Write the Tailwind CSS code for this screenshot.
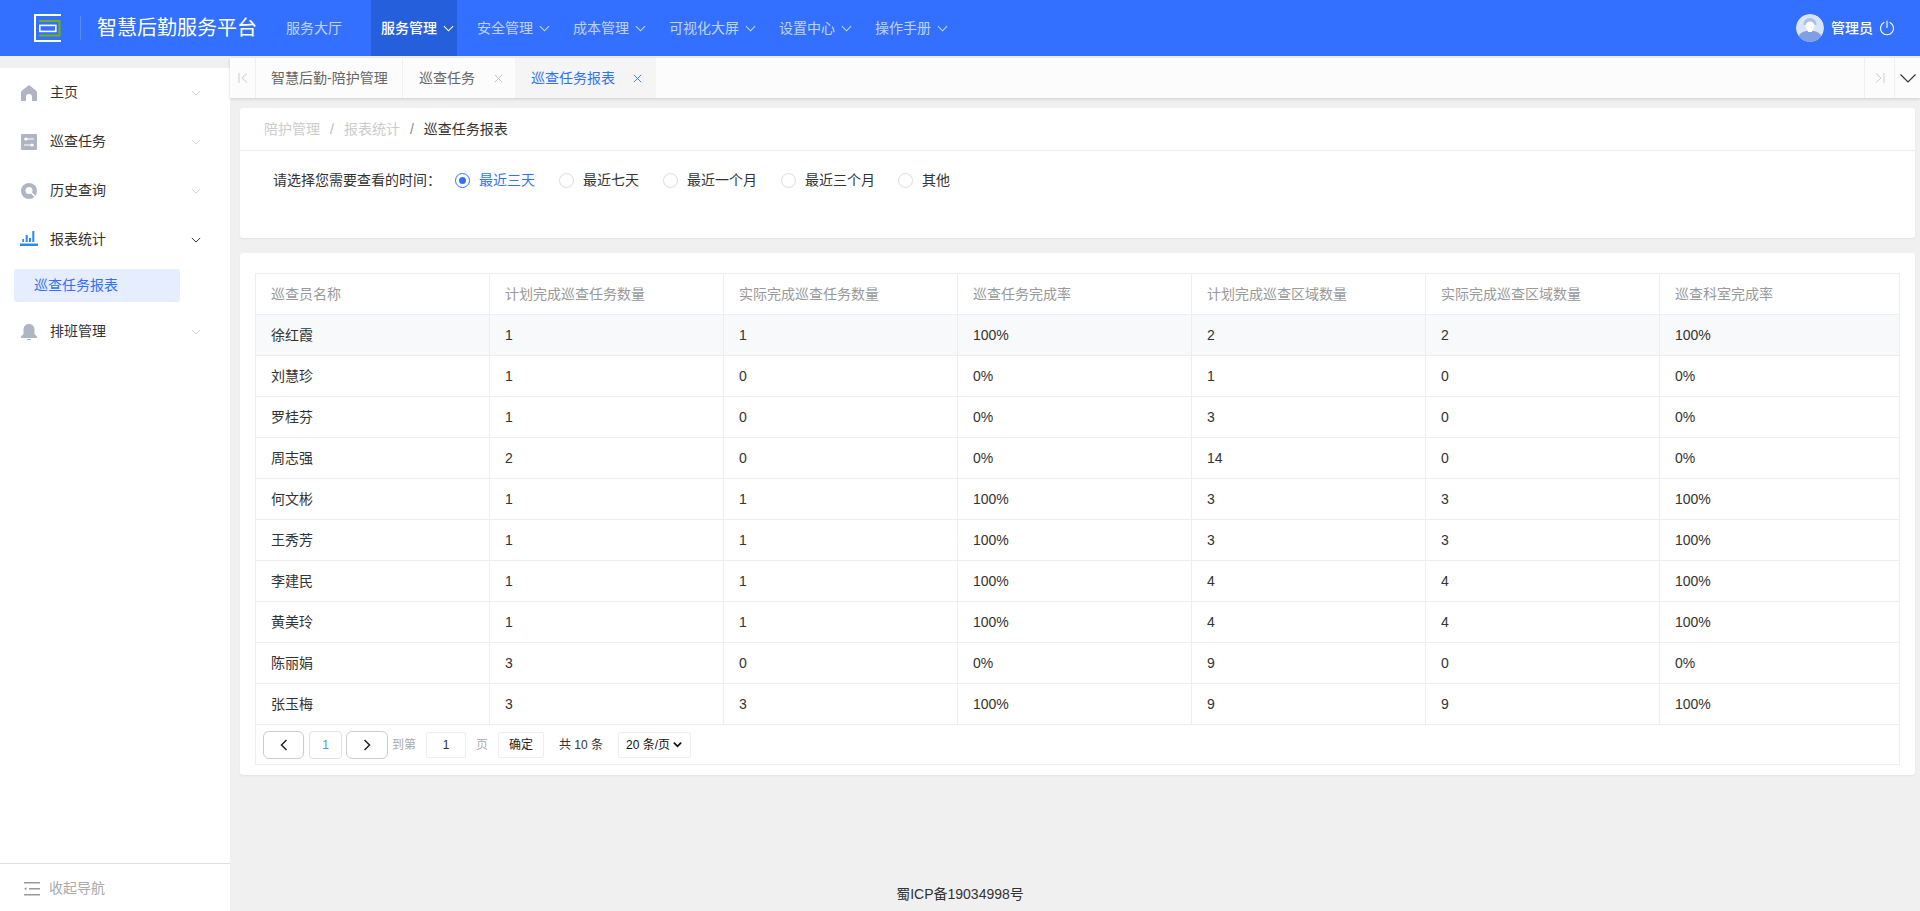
<!DOCTYPE html>
<html lang="zh-CN">
<head>
<meta charset="utf-8">
<title>智慧后勤服务平台</title>
<script src="https://cdn.jsdelivr.net/npm/@tailwindcss/browser@4"></script>
</head>
<body class="h-[911px] overflow-hidden bg-[#f0f0f0] font-['Liberation_Sans','Noto_Sans_CJK_SC',sans-serif] text-[14px] text-[#333]">

<!-- Header -->
<header class="flex h-14 items-center bg-[#3370ff] text-white">
    <svg class="ml-[34px] h-[28px] w-[28px]" viewBox="0 0 28 28" fill="none">
        <path d="M27 1H1v26h26" stroke="#fff" stroke-width="2"/>
        <path d="M5 7h20.500v14.600H5" stroke="#78b000" stroke-width="2"/>
        <rect x="5.800" y="11.400" width="16" height="6" stroke="#fff" stroke-width="1.600"/>
    </svg>
    <div class="ml-[18px] h-6 w-px bg-white/20"></div>
    <h1 class="ml-4 text-[20px] leading-none text-white">智慧后勤服务平台</h1>
    <a class="ml-[29px] text-white/70">服务大厅</a>
    <nav class="ml-[29px] flex h-full items-center gap-[10px] text-white/70">
        <a class="flex h-full items-center gap-[6px] bg-[#265fdc] pr-[2px] pl-[10px] font-medium text-white">服务管理
            <svg class="mr-[1px] h-[11px] w-[11px]" viewBox="0 0 12 12" fill="none" stroke="currentColor" stroke-width="1.2"><path d="M1 3.5l5 5 5-5"/></svg></a>
        <a class="flex h-full items-center gap-[6px] pr-[2px] pl-[10px]">安全管理
            <svg class="mr-[1px] h-[11px] w-[11px]" viewBox="0 0 12 12" fill="none" stroke="currentColor" stroke-width="1.2"><path d="M1 3.5l5 5 5-5"/></svg></a>
        <a class="flex h-full items-center gap-[6px] pr-[2px] pl-[10px]">成本管理
            <svg class="mr-[1px] h-[11px] w-[11px]" viewBox="0 0 12 12" fill="none" stroke="currentColor" stroke-width="1.2"><path d="M1 3.5l5 5 5-5"/></svg></a>
        <a class="flex h-full items-center gap-[6px] pr-[2px] pl-[10px]">可视化大屏
            <svg class="mr-[1px] h-[11px] w-[11px]" viewBox="0 0 12 12" fill="none" stroke="currentColor" stroke-width="1.2"><path d="M1 3.5l5 5 5-5"/></svg></a>
        <a class="flex h-full items-center gap-[6px] pr-[2px] pl-[10px]">设置中心
            <svg class="mr-[1px] h-[11px] w-[11px]" viewBox="0 0 12 12" fill="none" stroke="currentColor" stroke-width="1.2"><path d="M1 3.5l5 5 5-5"/></svg></a>
        <a class="flex h-full items-center gap-[6px] pr-[2px] pl-[10px]">操作手册
            <svg class="mr-[1px] h-[11px] w-[11px]" viewBox="0 0 12 12" fill="none" stroke="currentColor" stroke-width="1.2"><path d="M1 3.5l5 5 5-5"/></svg></a>
    </nav>
    <div class="mr-[25px] ml-auto flex items-center">
        <svg class="h-7 w-7 rounded-full" viewBox="0 0 28 28">
            <circle cx="14" cy="14" r="14" fill="#d9e4f8"/>
            <path d="M14 4c-4 0-6.500 3-6.500 7h13c0-4-2.500-7-6.500-7z" fill="#a9c0ec"/>
            <path d="M2.500 22c1.500-3 5-4.500 8-5h7c3 .5 6.500 2 8 5-2.500 3.800-6.800 6-11.500 6s-9-2.200-11.500-6z" fill="#7f9fe4"/>
            <circle cx="14" cy="12" r="4.500" fill="#fff"/>
            <path d="M11.500 15h5l-.5 3h-4z" fill="#fff"/>
        </svg>
        <span class="ml-[7px] font-medium">管理员</span>
        <svg class="ml-[6px] h-4 w-4" viewBox="0 0 16 16" fill="none" stroke="#fff" stroke-width="1.1" stroke-linecap="round"><path d="M5 2.500a6.500 6.500 0 1 0 6 0M8 1v6.500"/></svg>
    </div>
</header>

<div class="flex h-[855px]">
    <!-- Sidebar -->
    <aside class="mt-3 flex w-[230px] flex-none flex-col bg-white">
        <ul class="flex-1">
            <li class="flex h-[49px] items-center pr-[29px] pl-[21px]">
                <svg class="h-4 w-4" viewBox="0 0 16 16" fill="#b0b5c6"><path d="M8 0L1 5.500 0 7v9h5v-4a3 3 0 0 1 6 0v4h5V7l-1-1.500z"/></svg>
                <span class="ml-[13px] flex-1">主页</span>
                <svg class="h-[10px] w-[10px] text-[#c8c8c8]" viewBox="0 0 12 12" fill="none" stroke="currentColor" stroke-width="1"><path d="M1 3.500l5 5 5-5"/></svg>
            </li>
            <li class="flex h-[49px] items-center pr-[29px] pl-[21px]">
                <svg class="h-4 w-4" viewBox="0 0 16 16"><rect width="16" height="16" rx="1" fill="#b0b5c6"/><path d="M3 5h10M3 11h10" stroke="#fff" stroke-width="1"/><circle cx="5" cy="5" r="1.500" fill="#fff"/><circle cx="11" cy="11" r="1.500" fill="#fff"/></svg>
                <span class="ml-[13px] flex-1">巡查任务</span>
                <svg class="h-[10px] w-[10px] text-[#c8c8c8]" viewBox="0 0 12 12" fill="none" stroke="currentColor" stroke-width="1"><path d="M1 3.500l5 5 5-5"/></svg>
            </li>
            <li class="flex h-[49px] items-center pr-[29px] pl-[21px]">
                <svg class="h-4 w-4" viewBox="0 0 16 16"><circle cx="8" cy="8" r="8" fill="#b0b5c6"/><circle cx="8" cy="7.500" r="3.500" fill="#fff"/><path d="M10.500 10l3.500 3.500" stroke="#fff" stroke-width="1.500"/></svg>
                <span class="ml-[13px] flex-1">历史查询</span>
                <svg class="h-[10px] w-[10px] text-[#c8c8c8]" viewBox="0 0 12 12" fill="none" stroke="currentColor" stroke-width="1"><path d="M1 3.500l5 5 5-5"/></svg>
            </li>
            <li class="flex h-[49px] items-center pr-[29px] pl-5">
                <svg class="mb-[3px] h-[15px] w-[18px]" viewBox="0 0 18 15" fill="#2f86f6"><path d="M0 12.500h18V15H0zM2.300 8H4v3H2.300zM5.700 4h2v7h-2zM9 7h2v4H9zM12.300 0h2v11h-2z"/></svg>
                <span class="ml-[12px] flex-1">报表统计</span>
                <svg class="h-[10px] w-[10px] text-[#333]" viewBox="0 0 12 12" fill="none" stroke="currentColor" stroke-width="1.200"><path d="M1 3.500l5 5 5-5"/></svg>
            </li>
            <li class="mt-[5px] ml-[14px] flex h-[33px] w-[166px] items-center rounded-[3px] bg-[#e6edff] pl-5 text-[#3370ff]">巡查任务报表</li>
            <li class="mt-[5px] flex h-[49px] items-center pr-[29px] pl-[21px]">
                <svg class="h-4 w-4" viewBox="0 0 16 16" fill="#b0b5c6"><path d="M8 0C4.500 0 2.500 2.500 2.500 6v4L0 12.500V14h16v-1.500L13.500 10V6C13.500 2.500 11.500 0 8 0zM6 15h4v1H6z"/></svg>
                <span class="ml-[13px] flex-1">排班管理</span>
                <svg class="h-[10px] w-[10px] text-[#c8c8c8]" viewBox="0 0 12 12" fill="none" stroke="currentColor" stroke-width="1"><path d="M1 3.500l5 5 5-5"/></svg>
            </li>
        </ul>
        <div class="flex h-12 items-center border-t border-[#e0e0e0] pt-[2px] pl-6 text-[#aaa]">
            <svg class="h-[14px] w-4" viewBox="0 0 16 14" fill="#999"><path d="M0 0h16v1.500H0zM5 6h11v1.500H5zM0 12h16v1.500H0zM0 6.700l2.500-1.500v3z"/></svg>
            <span class="ml-[9px]">收起导航</span>
        </div>
    </aside>

    <!-- Main -->
    <main class="flex min-w-0 flex-1 flex-col">
        <!-- Tabs -->
        <div class="mt-[2px] flex h-10 flex-none items-stretch bg-[#fcfcfc] shadow-[0_1px_3px_rgba(0,0,0,0.15)]">
            <div class="flex w-[26px] items-center justify-center border-r border-[#f0f0f0] text-[#ccc]">
                <svg class="h-3 w-3" viewBox="0 0 12 12" fill="none" stroke="currentColor"><path d="M2 1v10M10 1.500L5 6l5 4.500"/></svg>
            </div>
            <div class="flex w-[147px] items-center border-r border-[#f0f0f0] pl-[15px] text-[#666]">智慧后勤-陪护管理</div>
            <div class="flex w-[112px] items-center pl-4 text-[#666]">巡查任务
                <svg class="ml-[19px] h-[9px] w-[9px] text-[#bbb]" viewBox="0 0 10 10" fill="none" stroke="currentColor"><path d="M1 1l8 8M9 1l-8 8"/></svg></div>
            <div class="flex w-[141px] items-center bg-[#f5f5f5] pl-4 text-[#3370ff]">巡查任务报表
                <svg class="ml-[18px] h-[9px] w-[9px]" viewBox="0 0 10 10" fill="none" stroke="currentColor"><path d="M1 1l8 8M9 1l-8 8"/></svg></div>
            <div class="ml-auto flex w-[31px] items-center justify-center border-x border-[#f0f0f0] text-[#ccc]">
                <svg class="h-3 w-3" viewBox="0 0 12 12" fill="none" stroke="currentColor"><path d="M10 1v10M2 1.500L7 6l-5 4.500"/></svg>
            </div>
            <div class="flex w-[25px] items-center justify-center text-[#333]">
                <svg class="h-4 w-4" viewBox="0 0 16 16" fill="none" stroke="currentColor" stroke-width="1.200"><path d="M.5 4.500L8 12l7.500-7.500"/></svg>
            </div>
        </div>

        <!-- Filter card -->
        <section class="mt-[10px] mr-[5px] ml-[10px] h-[130px] flex-none rounded-[3px] bg-white shadow-[0_1px_2px_rgba(0,0,0,0.06)]">
            <div class="flex h-[43px] items-center border-b border-[#eee] pl-6 text-[#333]">
                <span class="text-[#ccc]">陪护管理</span>
                <span class="mx-[10px] text-[#bbb]">/</span>
                <span class="text-[#ccc]">报表统计</span>
                <span class="mx-[10px] text-[#888]">/</span>
                <span>巡查任务报表</span>
            </div>
            <div class="flex h-[58px] items-center pl-[33px]">
                <span class="w-[182px]">请选择您需要查看的时间：</span>
                <label class="flex w-[104px] items-center gap-[9px] text-[#3370ff]">
                    <span class="flex h-[15px] w-[15px] items-center justify-center rounded-full border border-[#3370ff]"><span class="h-[7px] w-[7px] rounded-full bg-[#3370ff]"></span></span>最近三天</label>
                <label class="flex w-[104px] items-center gap-[9px]"><span class="h-[15px] w-[15px] rounded-full border border-[#ddd]"></span>最近七天</label>
                <label class="flex w-[118px] items-center gap-[9px]"><span class="h-[15px] w-[15px] rounded-full border border-[#ddd]"></span>最近一个月</label>
                <label class="flex w-[117px] items-center gap-[9px]"><span class="h-[15px] w-[15px] rounded-full border border-[#ddd]"></span>最近三个月</label>
                <label class="flex items-center gap-[9px]"><span class="h-[15px] w-[15px] rounded-full border border-[#ddd]"></span>其他</label>
            </div>
        </section>

        <!-- Table card -->
        <section class="mt-[15px] mr-[5px] ml-[10px] h-[522px] flex-none rounded-[3px] bg-white px-[15px] pt-5 shadow-[0_1px_2px_rgba(0,0,0,0.06)]">
            <table class="w-[1645px] table-fixed border-collapse border border-[#eee]">
                <colgroup>
                    <col class="w-[234px]"><col class="w-[234px]"><col class="w-[234px]"><col class="w-[234px]"><col class="w-[234px]"><col class="w-[234px]"><col>
                </colgroup>
                <thead>
                    <tr class="h-[41px] text-left text-[#999]">
                        <th class="border border-[#eee] pl-[15px] font-normal">巡查员名称</th>
                        <th class="border border-[#eee] pl-[15px] font-normal">计划完成巡查任务数量</th>
                        <th class="border border-[#eee] pl-[15px] font-normal">实际完成巡查任务数量</th>
                        <th class="border border-[#eee] pl-[15px] font-normal">巡查任务完成率</th>
                        <th class="border border-[#eee] pl-[15px] font-normal">计划完成巡查区域数量</th>
                        <th class="border border-[#eee] pl-[15px] font-normal">实际完成巡查区域数量</th>
                        <th class="border border-[#eee] pl-[15px] font-normal">巡查科室完成率</th>
                    </tr>
                </thead>
                <tbody>
                    <tr class="h-[41px] bg-[#f8f9fb]"><td class="border border-[#eee] pl-[15px]">徐红霞</td><td class="border border-[#eee] pl-[15px]">1</td><td class="border border-[#eee] pl-[15px]">1</td><td class="border border-[#eee] pl-[15px]">100%</td><td class="border border-[#eee] pl-[15px]">2</td><td class="border border-[#eee] pl-[15px]">2</td><td class="border border-[#eee] pl-[15px]">100%</td></tr>
                    <tr class="h-[41px]"><td class="border border-[#eee] pl-[15px]">刘慧珍</td><td class="border border-[#eee] pl-[15px]">1</td><td class="border border-[#eee] pl-[15px]">0</td><td class="border border-[#eee] pl-[15px]">0%</td><td class="border border-[#eee] pl-[15px]">1</td><td class="border border-[#eee] pl-[15px]">0</td><td class="border border-[#eee] pl-[15px]">0%</td></tr>
                    <tr class="h-[41px]"><td class="border border-[#eee] pl-[15px]">罗桂芬</td><td class="border border-[#eee] pl-[15px]">1</td><td class="border border-[#eee] pl-[15px]">0</td><td class="border border-[#eee] pl-[15px]">0%</td><td class="border border-[#eee] pl-[15px]">3</td><td class="border border-[#eee] pl-[15px]">0</td><td class="border border-[#eee] pl-[15px]">0%</td></tr>
                    <tr class="h-[41px]"><td class="border border-[#eee] pl-[15px]">周志强</td><td class="border border-[#eee] pl-[15px]">2</td><td class="border border-[#eee] pl-[15px]">0</td><td class="border border-[#eee] pl-[15px]">0%</td><td class="border border-[#eee] pl-[15px]">14</td><td class="border border-[#eee] pl-[15px]">0</td><td class="border border-[#eee] pl-[15px]">0%</td></tr>
                    <tr class="h-[41px]"><td class="border border-[#eee] pl-[15px]">何文彬</td><td class="border border-[#eee] pl-[15px]">1</td><td class="border border-[#eee] pl-[15px]">1</td><td class="border border-[#eee] pl-[15px]">100%</td><td class="border border-[#eee] pl-[15px]">3</td><td class="border border-[#eee] pl-[15px]">3</td><td class="border border-[#eee] pl-[15px]">100%</td></tr>
                    <tr class="h-[41px]"><td class="border border-[#eee] pl-[15px]">王秀芳</td><td class="border border-[#eee] pl-[15px]">1</td><td class="border border-[#eee] pl-[15px]">1</td><td class="border border-[#eee] pl-[15px]">100%</td><td class="border border-[#eee] pl-[15px]">3</td><td class="border border-[#eee] pl-[15px]">3</td><td class="border border-[#eee] pl-[15px]">100%</td></tr>
                    <tr class="h-[41px]"><td class="border border-[#eee] pl-[15px]">李建民</td><td class="border border-[#eee] pl-[15px]">1</td><td class="border border-[#eee] pl-[15px]">1</td><td class="border border-[#eee] pl-[15px]">100%</td><td class="border border-[#eee] pl-[15px]">4</td><td class="border border-[#eee] pl-[15px]">4</td><td class="border border-[#eee] pl-[15px]">100%</td></tr>
                    <tr class="h-[41px]"><td class="border border-[#eee] pl-[15px]">黄美玲</td><td class="border border-[#eee] pl-[15px]">1</td><td class="border border-[#eee] pl-[15px]">1</td><td class="border border-[#eee] pl-[15px]">100%</td><td class="border border-[#eee] pl-[15px]">4</td><td class="border border-[#eee] pl-[15px]">4</td><td class="border border-[#eee] pl-[15px]">100%</td></tr>
                    <tr class="h-[41px]"><td class="border border-[#eee] pl-[15px]">陈丽娟</td><td class="border border-[#eee] pl-[15px]">3</td><td class="border border-[#eee] pl-[15px]">0</td><td class="border border-[#eee] pl-[15px]">0%</td><td class="border border-[#eee] pl-[15px]">9</td><td class="border border-[#eee] pl-[15px]">0</td><td class="border border-[#eee] pl-[15px]">0%</td></tr>
                    <tr class="h-[41px]"><td class="border border-[#eee] pl-[15px]">张玉梅</td><td class="border border-[#eee] pl-[15px]">3</td><td class="border border-[#eee] pl-[15px]">3</td><td class="border border-[#eee] pl-[15px]">100%</td><td class="border border-[#eee] pl-[15px]">9</td><td class="border border-[#eee] pl-[15px]">9</td><td class="border border-[#eee] pl-[15px]">100%</td></tr>
                </tbody>
            </table>
            <!-- Pagination -->
            <div class="flex h-10 w-[1645px] items-center border-x border-b border-[#eee] pl-[7px] text-[12px]">
                <button class="flex h-7 w-[41px] items-center justify-center rounded-[6px] border border-[#ccc]">
                    <svg class="h-3 w-3" viewBox="0 0 12 12" fill="none" stroke="#222" stroke-width="1.500"><path d="M8.500 1L3.500 6l5 5"/></svg>
                </button>
                <span class="ml-[5px] flex h-7 w-[33px] items-center justify-center rounded-[4px] border border-[#e2e2e2] text-[#5a8dff]">1</span>
                <button class="ml-1 flex h-7 w-[42px] items-center justify-center rounded-[6px] border border-[#ccc]">
                    <svg class="h-3 w-3" viewBox="0 0 12 12" fill="none" stroke="#222" stroke-width="1.500"><path d="M3.500 1l5 5-5 5"/></svg>
                </button>
                <span class="ml-1 text-[#aaa]">到第</span>
                <span class="ml-[10px] flex h-[26px] w-10 items-center justify-center rounded-[2px] border border-[#eee]">1</span>
                <span class="ml-[10px] text-[#aaa]">页</span>
                <button class="ml-[10px] flex h-[26px] w-[46px] items-center justify-center rounded-[2px] border border-[#eee] text-[#222]">确定</button>
                <span class="ml-[15px]">共 10 条</span>
                <span class="ml-[15px] flex h-[26px] w-[73px] items-center justify-between rounded-[2px] border border-[#eee] pr-2 pl-[7px] text-[#111]">20 条/页
                    <svg class="h-[9px] w-[9px]" viewBox="0 0 10 10" fill="none" stroke="#111" stroke-width="2"><path d="M1 3l4 4 4-4"/></svg>
                </span>
            </div>
        </section>

        <footer class="mt-auto flex h-[34px] flex-none items-start justify-center pt-[7px] pr-[230px] text-[#333]">蜀ICP备19034998号</footer>
    </main>
</div>
</body>
</html>
